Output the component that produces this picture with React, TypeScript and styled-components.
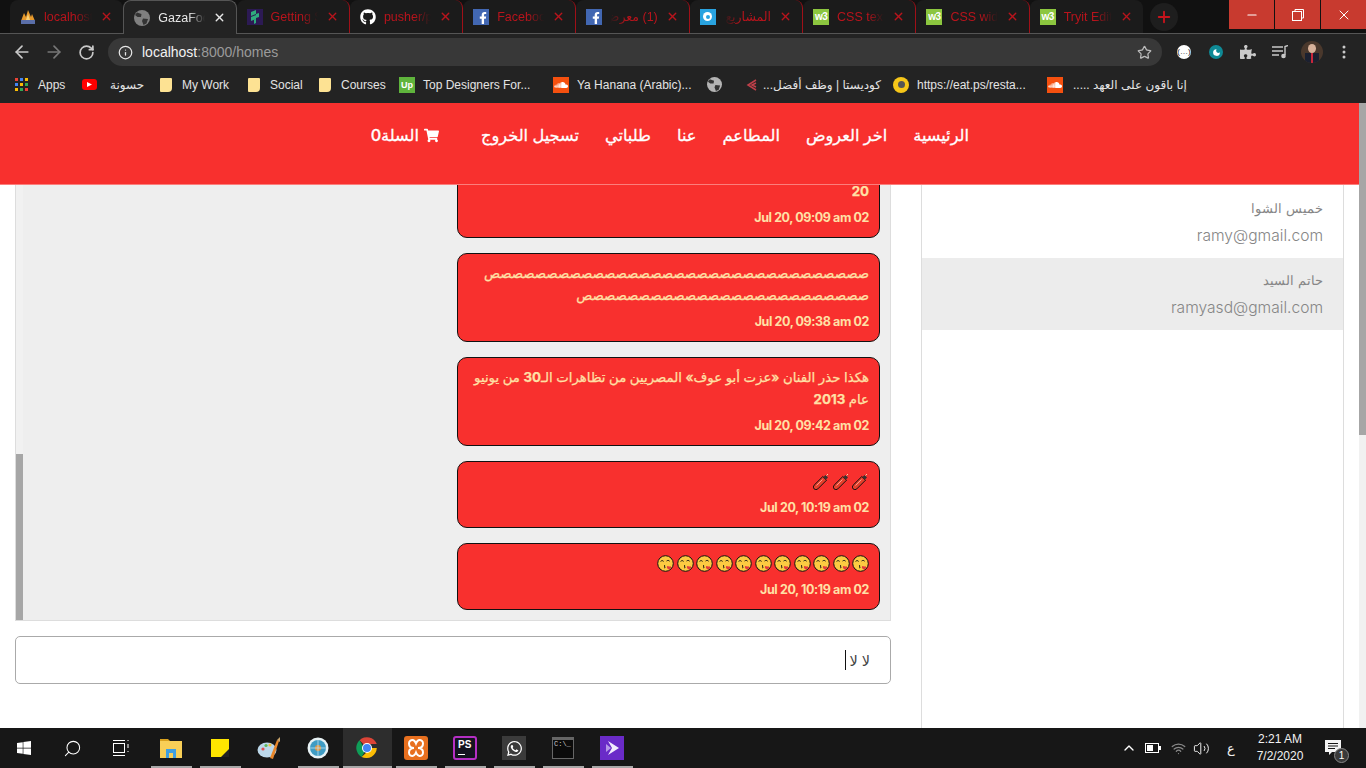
import React from 'react';
import styled, { createGlobalStyle } from 'styled-components';
import { ArrowLeft, ArrowRight, RotateCw, Info, Star, Plus, X, Minus, Search, ChevronUp, Volume2, Wifi, Moon } from 'lucide-react';
import { FaFacebookF, FaGithub, FaPuzzlePiece, FaShoppingCart, FaSoundcloud, FaWhatsapp, FaWindows } from 'react-icons/fa';

const GlobalStyle = createGlobalStyle`
  html, body {
    margin: 0;
    height: 100%;
    overflow: hidden;
    background: #fff;
  }
  * {
    box-sizing: border-box;
  }
`;

const uiFont = '"Liberation Sans", "DejaVu Sans", sans-serif';
const pageFont = 'Inter, "DejaVu Sans", sans-serif';

const Screen = styled.div`
  width: 1366px;
  height: 768px;
  display: flex;
  flex-direction: column;
  overflow: hidden;
  font-family: ${uiFont};
`;

/* browser chrome */
const TabStrip = styled.div`
  height: 34px;
  flex: none;
  display: flex;
  background: #111;
  border-bottom: 1px solid #555;
  padding-left: 10px;
`;

const Tab = styled.div<{ $active?: boolean; $sep?: boolean }>`
  width: 113.3px;
  height: ${(p) => (p.$active ? '34px' : '33px')};
  flex: none;
  display: flex;
  align-items: center;
  gap: 8px;
  padding: 0 10px 0 10px;
  background: ${(p) => (p.$active ? '#232323' : '#1b1b1b')};
  border-radius: 8px 8px 0 0;
  border: ${(p) => (p.$active ? '1px solid #555' : 'none')};
  border-bottom: none;
  border-right: ${(p) => (p.$sep ? '1px solid #a01018' : undefined)};
  color: ${(p) => (p.$active ? '#e8e8e8' : '#b8141c')};
  font-size: 12.5px;
`;

const TabIcon = styled.div`
  width: 16px;
  height: 16px;
  flex: none;
  display: flex;
  align-items: center;
  justify-content: center;
`;

const TabTitle = styled.div<{ $rtl?: boolean }>`
  flex: 1;
  min-width: 0;
  overflow: hidden;
  white-space: nowrap;
  direction: ${(p) => (p.$rtl ? 'rtl' : 'ltr')};
  -webkit-mask-image: linear-gradient(to ${(p) => (p.$rtl ? 'left' : 'right')}, #000 65%, transparent);
  mask-image: linear-gradient(to ${(p) => (p.$rtl ? 'left' : 'right')}, #000 65%, transparent);
`;

const NewTab = styled.div`
  width: 28px;
  height: 28px;
  flex: none;
  margin: 3px 0 0 7px;
  border-radius: 50%;
  background: #1e1e1e;
  color: #c8141c;
  display: flex;
  align-items: center;
  justify-content: center;
`;

const WindowControls = styled.div`
  margin-left: auto;
  height: 29px;
  display: flex;
  gap: 1px;
`;

const WindowButton = styled.div<{ $w: number }>`
  width: ${(p) => p.$w}px;
  background: #c83a2f;
  color: #fff;
  display: flex;
  align-items: center;
  justify-content: center;
`;

const Toolbar = styled.div`
  height: 32px;
  flex: none;
  display: flex;
  align-items: center;
  background: #232323;
  padding: 4px 0 0 6px;
`;

const NavButton = styled.div<{ $dim?: boolean }>`
  width: 32px;
  display: flex;
  justify-content: center;
  color: ${(p) => (p.$dim ? '#777' : '#c9c9c9')};
`;

const UrlBar = styled.div`
  width: 1054px;
  height: 28px;
  margin: 0 6px 0 6px;
  display: flex;
  align-items: center;
  gap: 9px;
  padding: 0 10px 0 10px;
  border-radius: 14px;
  background: #383838;
  color: #e6e6e6;
`;

const UrlText = styled.div`
  flex: 1;
  font-size: 14px;
  color: #f2f2f2;
  span {
    color: #9b9b9b;
  }
`;

const ExtensionSlot = styled.div`
  width: 32px;
  flex: none;
  display: flex;
  justify-content: center;
  color: #c9c9c9;
`;

const WhiteDot = styled.div`
  width: 14px;
  height: 14px;
  border-radius: 50%;
  background: #fff;
  color: #222;
  font-size: 8px;
  line-height: 14px;
  text-align: center;
`;

const Avatar = styled.div`
  position: relative;
  width: 22px;
  height: 22px;
  border-radius: 50%;
  background: #4a382c;
  display: flex;
  justify-content: center;
  align-items: flex-end;
  overflow: hidden;
`;

const AvatarFace = styled.div`
  position: absolute;
  top: 3px;
  left: 7px;
  width: 8px;
  height: 9px;
  border-radius: 50%;
  background: #d8b29a;
`;

const AvatarBody = styled.div`
  width: 14px;
  height: 10px;
  background: linear-gradient(to right, #1b2030 42%, #c9263a 42% 58%, #1b2030 58%);
`;

const Bookmarks = styled.div`
  height: 37px;
  flex: none;
  display: flex;
  align-items: center;
  background: #232323;
  padding-left: 15px;
  color: #e4e4e4;
  font-size: 12px;
`;

const Bookmark = styled.div<{ $w: number; $gap?: number }>`
  width: ${(p) => p.$w}px;
  flex: none;
  display: flex;
  align-items: center;
  gap: ${(p) => p.$gap ?? 10}px;
  white-space: nowrap;
`;

const RtlLabel = styled.span`
  direction: rtl;
  unicode-bidi: isolate;
`;

const Folder = styled.div`
  width: 12px;
  height: 14px;
  flex: none;
  background: #fde293;
  border-radius: 1px;
  border-bottom-right-radius: 4px;
`;

const IconTile = styled.div<{ $bg: string; $size?: number; $round?: boolean }>`
  width: ${(p) => p.$size ?? 16}px;
  height: ${(p) => p.$size ?? 16}px;
  flex: none;
  background: ${(p) => p.$bg};
  border-radius: ${(p) => (p.$round ? '50%' : '0')};
  color: #fff;
  display: flex;
  align-items: center;
  justify-content: center;
`;

const W3Mark = styled(IconTile)`
  font-size: 10px;
  font-weight: 700;
  letter-spacing: -0.5px;
`;

const YoutubeTile = styled(IconTile)`
  height: 11px;
  border-radius: 3px;
`;

const UpworkTile = styled(IconTile)`
  font-size: 9px;
  font-weight: 700;
`;

/* page */
const PageRow = styled.div`
  flex: 1;
  min-height: 0;
  display: flex;
`;

const Page = styled.div`
  flex: 1;
  min-width: 0;
  display: flex;
  flex-direction: column;
  background: #fff;
  font-family: ${pageFont};
`;

const PageScroll = styled.div`
  width: 7px;
  flex: none;
  background: #f1f1f1;
`;

const PageThumb = styled.div`
  height: 332px;
  background: #a6a6a6;
`;

const Navbar = styled.nav`
  height: 82px;
  flex: none;
  display: flex;
  direction: rtl;
  align-items: flex-start;
  gap: 26px;
  padding: 21px 390px 0 0;
  background: #f8302e;
  border-bottom: 1px solid #fb7e7c;
  color: #fff;
  font-size: 16.2px;
  font-weight: 500;
  line-height: 22px;
  -webkit-text-stroke: 0.3px #fff;
`;

const NavItem = styled.div<{ $wide?: boolean }>`
  white-space: nowrap;
  display: flex;
  align-items: center;
  gap: 5px;
  margin-right: ${(p) => (p.$wide ? '16px' : '0')};
`;

const Main = styled.div`
  flex: 1;
  min-height: 0;
  display: flex;
  gap: 30px;
  padding: 0 15px;
`;

const ChatColumn = styled.div`
  width: 876px;
  flex: none;
  display: flex;
  flex-direction: column;
  gap: 15px;
  padding-bottom: 44px;
`;

const ChatPanel = styled.div`
  flex: 1;
  min-height: 0;
  display: flex;
  background: #eee;
  border: 1px solid #ddd;
  border-top: none;
`;

const ChatScroll = styled.div`
  width: 7px;
  flex: none;
  display: flex;
  flex-direction: column;
  justify-content: flex-end;
  background: #f1f1f1;
`;

const ChatThumb = styled.div`
  height: 166px;
  background: #a6a6a6;
`;

const Messages = styled.div`
  flex: 1;
  min-width: 0;
  display: flex;
  flex-direction: column;
  justify-content: flex-end;
  align-items: flex-end;
  gap: 15px;
  overflow: hidden;
  padding: 0 10px 10px 0;
`;

const Bubble = styled.div`
  width: 423px;
  flex: none;
  padding: 8px 10px 9px;
  background: #f8302e;
  border: 1px solid #111;
  border-radius: 10px;
  color: #ffe0a6;
  direction: rtl;
  font-size: 13.3px;
  font-weight: 500;
  line-height: 22px;
`;

const BubbleLine = styled.div`
  white-space: nowrap;
  -webkit-text-stroke: 0.25px #ffe0a6;
`;

const Strong = styled.span`
  font-weight: 700;
`;

const BubbleTime = styled.div`
  margin-top: 5px;
  direction: ltr;
  text-align: right;
  font-size: 12.5px;
  font-weight: 700;
  line-height: 21px;
  letter-spacing: -0.4px;
`;

const EmojiRow = styled.div`
  height: 22px;
  display: flex;
  align-items: center;
  gap: 2.5px;
`;

const MessageInput = styled.div`
  height: 48px;
  flex: none;
  display: flex;
  align-items: center;
  direction: rtl;
  padding-right: 20px;
  border: 1px solid #aaa;
  border-radius: 5px;
  background: #fff;
  color: #444;
  font-size: 14.5px;
`;

const Caret = styled.div`
  width: 1px;
  height: 20px;
  margin-right: 3px;
  background: #111;
`;

const Sidebar = styled.aside`
  width: 423px;
  flex: none;
  padding-top: 1px;
  border-left: 1px solid #ddd;
  border-right: 1px solid #ddd;
`;

const ContactRow = styled.div<{ $shaded?: boolean }>`
  height: 72px;
  padding: 13px 20px 0 0;
  background: ${(p) => (p.$shaded ? '#ececec' : '#fff')};
  text-align: right;
  color: #868686;
`;

const ContactName = styled.div`
  direction: rtl;
  font-size: 12.5px;
  font-weight: 300;
  line-height: 20px;
`;

const ContactEmail = styled.div`
  margin-top: 7px;
  font-size: 15.6px;
  font-weight: 300;
  line-height: 20px;
`;

/* windows taskbar */
const Taskbar = styled.div`
  height: 40px;
  flex: none;
  display: flex;
  background: #171717;
  color: #fff;
`;

const TaskSlot = styled.div<{ $w?: number; $open?: boolean; $active?: boolean }>`
  position: relative;
  width: ${(p) => p.$w ?? 49}px;
  flex: none;
  display: flex;
  align-items: center;
  justify-content: center;
  background: ${(p) => (p.$active ? '#2d2d2d' : 'transparent')};
  &::after {
    content: '';
    display: ${(p) => (p.$open ? 'block' : 'none')};
    position: absolute;
    bottom: 0;
    left: ${(p) => (p.$active ? '0' : '4px')};
    right: ${(p) => (p.$active ? '0' : '4px')};
    height: 2px;
    background: #a8a8a8;
  }
`;

const Tray = styled.div`
  margin-left: auto;
  display: flex;
  padding-right: 9px;
`;

const Clock = styled.div`
  font-size: 12px;
  line-height: 17px;
  text-align: center;
  color: #f2f2f2;
`;

const LangMark = styled.div`
  font-size: 13px;
  color: #eee;
`;

const NoticeWrap = styled.div`
  position: relative;
  width: 16px;
  height: 17px;
`;

const NoticeBadge = styled.div`
  position: absolute;
  right: -8px;
  bottom: -6px;
  width: 15px;
  height: 15px;
  border-radius: 50%;
  background: #3a3a3a;
  border: 1px solid #888;
  font-size: 10px;
  line-height: 13px;
  text-align: center;
  color: #fff;
`;

const TerminalBox = styled.div`
  width: 22px;
  height: 22px;
  background: #0b0b0b;
  border: 1px solid #666;
  border-top-width: 3px;
  color: #ccc;
  font-family: "Liberation Mono", monospace;
  font-size: 7px;
  line-height: 9px;
  padding-left: 1px;
`;

const XamppTile = styled(IconTile)`
  border-radius: 3px;
`;

const PsTile = styled.div`
  position: relative;
  width: 24px;
  height: 24px;
  padding: 1px 0 0 3px;
  background: #14141f;
  border: 2px solid #b52fc4;
  border-radius: 3px;
  color: #fff;
  font-size: 10px;
  font-weight: 700;
  line-height: 12px;
  &::after {
    content: '';
    position: absolute;
    left: 3px;
    bottom: 3px;
    width: 7px;
    height: 1px;
    background: #fff;
  }
`;

/* drawings */
const Globe = ({ size = 16, fill = '#b4b4b4' }: { size?: number; fill?: string }) => (
  <svg width={size} height={size} viewBox="0 0 16 16">
    <circle cx="8" cy="8" r="8" fill={fill} />
    <path d="M3 2.500 7.500 4 7 7 3.500 7 1 5ZM9 8.500l5 .5-1.500 4.500L9.500 15 8 11Z" fill="#333" />
  </svg>
);

const ChromeLogo = () => (
  <svg width="22" height="22" viewBox="0 0 22 22">
    <path d="M11 11 3.600 3.200A10.500 10.500 0 0 1 20.800 7H11Z" fill="#db4437" />
    <path d="M11 11 5.600 20A10.500 10.500 0 0 1 3.600 3.200L8 11Z" fill="#0f9d58" />
    <path d="M11 11h9.800A10.500 10.500 0 0 1 5.600 20L11 15Z" fill="#fbbc05" />
    <circle cx="11" cy="11" r="5" fill="#fff" />
    <circle cx="11" cy="11" r="4" fill="#4285f4" />
  </svg>
);

const FlameLogo = () => (
  <svg width="16" height="16" viewBox="0 0 16 16">
    <path d="M1 12 4 4l2 4 2-7 3 7 1-3 3 7Z" fill="#e89a2c" />
    <path d="M6 11l2-6 2 6Z" fill="#f8d27a" />
    <rect x="1" y="11" width="14" height="4" fill="#5a6ea8" />
  </svg>
);

const PusherLogo = () => (
  <svg width="16" height="16" viewBox="0 0 16 16">
    <rect width="16" height="16" fill="#2c1a54" />
    <path d="M4 3 9 1v4L4 7ZM4 8l5-2v4l-5 2ZM9 5l3-1v4L9 9ZM7 11l2-1v4l-2 1Z" fill="#2fae7e" />
  </svg>
);

const AppsGrid = () => (
  <svg width="13" height="13" viewBox="0 0 13 13">
    {[0, 5, 10].map((y, row) =>
      [0, 5, 10].map((x, col) => (
        <rect key={`${row}${col}`} x={x} y={y} width="3" height="3" fill={['#ea4335', '#4285f4', '#fbbc05', '#34a853'][(row + col) % 4]} />
      )),
    )}
  </svg>
);

const Firecracker = () => (
  <svg width="17" height="17" viewBox="0 0 17 17">
    <path d="M1.100 12.200 9.800 3.500 13.500 7.200 4.800 15.900a2.600 2.600 0 0 1-3.700-3.700Z" fill="#e5402c" stroke="#111" strokeWidth="1" />
    <path d="M3.500 12.500 9.500 6.500" stroke="#f7a090" strokeWidth="1" />
    <path d="M10.500 4 12.500 2l2.500 2.500-2 2Z" fill="#333" />
    <path d="M13.500 2.500 15 1" stroke="#f2d9a8" strokeWidth="1" />
  </svg>
);

const KissFace = () => (
  <svg width="17" height="17" viewBox="0 0 17 17">
    <circle cx="8.500" cy="8.500" r="7.800" fill="#fccb42" stroke="#111" strokeWidth="1" />
    <path d="M3.600 6.400c1-1 2.200-1 3 0M9.600 6c1-.8 2.200-.8 3 .2" fill="none" stroke="#111" strokeWidth="1" />
    <path d="M7 10.400c1.200.2 1.600.8.400 1.200 1.200.4.800 1.200-.4 1.400" fill="none" stroke="#111" strokeWidth=".9" />
    <path d="M11.600 14.400c-2-1.200-2.200-3-1-3.400.7-.2 1.200.2 1.400.7.4-.5 1-.7 1.700-.3 1 .7.400 2.400-2.100 3Z" fill="#e33b3b" />
  </svg>
);

const ExplorerIcon = () => (
  <svg width="22" height="20" viewBox="0 0 22 20">
    <path d="M0 3V1h8l2 2Z" fill="#d9a21f" />
    <rect y="3" width="22" height="17" fill="#f8cf57" />
    <rect x="6" y="11" width="10" height="9" fill="#3f9fe0" />
    <rect x="9" y="15" width="4" height="5" fill="#f8cf57" />
  </svg>
);

const StickyIcon = () => (
  <svg width="18" height="18" viewBox="0 0 18 18">
    <rect width="18" height="18" fill="#ffe600" />
    <path d="M18 10v8H10Z" fill="#222" />
  </svg>
);

const PaintIcon = () => (
  <svg width="24" height="24" viewBox="0 0 24 24">
    <ellipse cx="10" cy="14" rx="9.500" ry="7.500" fill="#bcd8ea" />
    <circle cx="6" cy="13" r="1.600" fill="#e05050" />
    <circle cx="9" cy="9.500" r="1.600" fill="#5cb85c" />
    <circle cx="13" cy="9" r="1.600" fill="#f0c040" />
    <path d="M13 22 20 4l2 1-6 18Z" fill="#e8862a" />
    <path d="M20 4l3-3 0 5Z" fill="#c9a46a" />
  </svg>
);

const CompassIcon = () => (
  <svg width="22" height="22" viewBox="0 0 22 22">
    <circle cx="11" cy="11" r="10.500" fill="#e8f2f5" />
    <circle cx="11" cy="11" r="8" fill="#3f9cc4" />
    <circle cx="11" cy="11" r="3" fill="#e8963a" />
    <path d="M11 3v16M3 11h16" stroke="#bfe0ee" strokeWidth=".8" />
  </svg>
);

const VsIcon = () => (
  <svg width="24" height="24" viewBox="0 0 24 24">
    <rect width="24" height="24" fill="#6a2bc8" />
    <path d="M8 5l11 7-11 7 4-7Z" fill="#f2ecfd" />
    <path d="M6 8l5 4-5 4Z" fill="#b79ae8" />
  </svg>
);

const TaskViewIcon = () => (
  <svg width="16" height="18" viewBox="0 0 16 18" fill="none" stroke="#fff" strokeWidth="1">
    <rect x="0.500" y="4.500" width="11" height="9" />
    <path d="M0 1.500h12M0 16.500h12M15 1v1M15 5v4M15 12v1" />
  </svg>
);

const BatteryIcon = () => (
  <svg width="16" height="10" viewBox="0 0 16 10">
    <rect x="0.500" y="0.500" width="13" height="9" fill="none" stroke="#fff" />
    <rect x="2" y="2" width="6" height="6" fill="#fff" />
    <rect x="14" y="3" width="2" height="4" fill="#fff" />
  </svg>
);

const NoticeIcon = () => (
  <svg width="16" height="16" viewBox="0 0 16 16">
    <path d="M0 0h16v12H7l-3 3v-3H0Z" fill="#f4f4f4" />
    <path d="M3 3.500h10M3 6h10M3 8.500h7" stroke="#171717" strokeWidth="1" />
  </svg>
);

const XamppMark = () => (
  <svg width="16" height="18" viewBox="0 0 16 18" fill="none" stroke="#fff" strokeWidth="2">
    <path d="M6 9C2 9 1 7 1 4.500S3 1 4.500 1 7 2 8 4.500C9 2 10 1 11.500 1S15 2 15 4.500 14 9 10 9M6 9c-4 0-5 2-5 4.500S3 17 4.500 17 7 16 8 13.500c1 2.500 2 3.500 3.500 3.500s3.500-1 3.500-3.500S14 9 10 9" />
  </svg>
);

const PlaylistIcon = () => (
  <svg width="16" height="14" viewBox="0 0 16 14" fill="none" stroke="#c9c9c9" strokeWidth="1.400">
    <path d="M0 2h11M0 6h11M0 10h7M13 10V1.500l3-1" />
    <circle cx="11.500" cy="11" r="1.600" fill="#c9c9c9" />
  </svg>
);

const MoreIcon = () => (
  <svg width="4" height="14" viewBox="0 0 4 14" fill="#c9c9c9">
    <circle cx="2" cy="2" r="1.500" />
    <circle cx="2" cy="7" r="1.500" />
    <circle cx="2" cy="12" r="1.500" />
  </svg>
);

const FbGlyph = styled(FaFacebookF)`
  margin: 0 0 -3px 3px;
`;

const fbIcon = (
  <IconTile $bg="#4267b2">
    <FbGlyph size={12} />
  </IconTile>
);

const w3Icon = <W3Mark $bg="#8cc63f">w3</W3Mark>;

const soundcloudIcon = (
  <IconTile $bg="#f5500f">
    <FaSoundcloud size={14} />
  </IconTile>
);

type TabData = { title: string; icon: React.ReactNode; rtl?: boolean; active?: boolean; sep?: boolean };

const tabs: TabData[] = [
  { title: 'localhost', icon: <FlameLogo /> },
  { title: 'GazaFood', icon: <Globe fill="#808080" />, active: true },
  { title: 'Getting Started', icon: <PusherLogo />, sep: true },
  { title: 'pusher/pusher', icon: <FaGithub size={16} color="#fff" />, sep: true },
  { title: 'Facebook', icon: fbIcon, sep: true },
  { title: '(1) معرض', icon: fbIcon, rtl: true, sep: true },
  {
    title: 'المشاريع',
    icon: (
      <IconTile $bg="#29a3e0">
        <IconTile $bg="#fff" $size={9} $round>
          <IconTile $bg="#29a3e0" $size={4} $round />
        </IconTile>
      </IconTile>
    ),
    rtl: true,
    sep: true,
  },
  { title: 'CSS text-align', icon: w3Icon, sep: true },
  { title: 'CSS width', icon: w3Icon, sep: true },
  { title: 'Tryit Editor', icon: w3Icon },
];

const messages = [
  { lines: [<Strong>20</Strong>], time: 'Jul 20, 09:09 am 02' },
  { lines: ['ص'.repeat(33), 'ص'.repeat(25)], time: 'Jul 20, 09:38 am 02' },
  {
    lines: [
      <>
        هكذا حذر الفنان «عزت أبو عوف» المصريين من تظاهرات الـ<Strong>30</Strong> من يونيو
      </>,
      <>
        عام <Strong>2013</Strong>
      </>,
    ],
    time: 'Jul 20, 09:42 am 02',
  },
];

const App: React.FC = () => {
  return (
    <Screen>
      <GlobalStyle />
      <TabStrip>
        {tabs.map((tab) => (
          <Tab key={tab.title} $active={tab.active} $sep={tab.sep}>
            <TabIcon>{tab.icon}</TabIcon>
            <TabTitle $rtl={tab.rtl}>{tab.title}</TabTitle>
            <X size={13} strokeWidth={2.5} />
          </Tab>
        ))}
        <NewTab>
          <Plus size={18} strokeWidth={2.5} />
        </NewTab>
        <WindowControls>
          <WindowButton $w={45}>
            <Minus size={14} />
          </WindowButton>
          <WindowButton $w={45}>
            <svg width="12" height="12" viewBox="0 0 12 12" fill="none" stroke="#fff">
              <rect x="0.500" y="2.500" width="9" height="9" />
              <path d="M3 2.500V.5h8.500v8.500H9.500" />
            </svg>
          </WindowButton>
          <WindowButton $w={45}>
            <X size={16} strokeWidth={1.5} />
          </WindowButton>
        </WindowControls>
      </TabStrip>

      <Toolbar>
        <NavButton>
          <ArrowLeft size={20} />
        </NavButton>
        <NavButton $dim>
          <ArrowRight size={20} />
        </NavButton>
        <NavButton>
          <RotateCw size={17} strokeWidth={2.4} />
        </NavButton>
        <UrlBar>
          <Info size={15} />
          <UrlText>
            localhost<span>:8000/homes</span>
          </UrlText>
          <Star size={15} color="#bbb" />
        </UrlBar>
        <ExtensionSlot>
          <WhiteDot>(…)</WhiteDot>
        </ExtensionSlot>
        <ExtensionSlot>
          <IconTile $bg="#0f8a96" $size={14} $round>
            <Moon size={9} fill="#fff" strokeWidth={0} />
          </IconTile>
        </ExtensionSlot>
        <ExtensionSlot>
          <FaPuzzlePiece size={16} />
        </ExtensionSlot>
        <ExtensionSlot>
          <PlaylistIcon />
        </ExtensionSlot>
        <ExtensionSlot>
          <Avatar>
            <AvatarFace />
            <AvatarBody />
          </Avatar>
        </ExtensionSlot>
        <ExtensionSlot>
          <MoreIcon />
        </ExtensionSlot>
      </Toolbar>

      <Bookmarks>
        <Bookmark $w={67}>
          <AppsGrid />
          Apps
        </Bookmark>
        <Bookmark $w={78} $gap={13}>
          <YoutubeTile $bg="#f00" $size={15}>
            <svg width="5" height="5" viewBox="0 0 5 5">
              <path d="M0 0l5 2.500-5 2.500Z" fill="#fff" />
            </svg>
          </YoutubeTile>
          حسونة
        </Bookmark>
        <Bookmark $w={88}>
          <Folder />
          My Work
        </Bookmark>
        <Bookmark $w={71}>
          <Folder />
          Social
        </Bookmark>
        <Bookmark $w={80}>
          <Folder />
          Courses
        </Bookmark>
        <Bookmark $w={154} $gap={8}>
          <UpworkTile $bg="#5fb43c">Up</UpworkTile>
          Top Designers For...
        </Bookmark>
        <Bookmark $w={154} $gap={8}>
          {soundcloudIcon}
          Ya Hanana (Arabic)...
        </Bookmark>
        <Bookmark $w={38}>
          <Globe size={15} />
        </Bookmark>
        <Bookmark $w={148} $gap={6}>
          <svg width="12" height="14" viewBox="0 0 12 14" fill="none" stroke="#c0404a" strokeWidth="1.500">
            <path d="M11 2 3 7l8 5M11 5 7 7l4 2" />
          </svg>
          <RtlLabel>كوديستا | وظف أفضل...</RtlLabel>
        </Bookmark>
        <Bookmark $w={154} $gap={8}>
          <IconTile $bg="#f6c619" $round>
            <IconTile $bg="#555" $size={7} $round />
          </IconTile>
          https://eat.ps/resta...
        </Bookmark>
        <Bookmark $w={140}>
          {soundcloudIcon}
          <RtlLabel>إنا باقون على العهد .....</RtlLabel>
        </Bookmark>
      </Bookmarks>

      <PageRow>
        <Page>
          <Navbar>
            <NavItem>الرئيسية</NavItem>
            <NavItem>اخر العروض</NavItem>
            <NavItem>المطاعم</NavItem>
            <NavItem>عنا</NavItem>
            <NavItem>طلباتي</NavItem>
            <NavItem>تسجيل الخروج</NavItem>
            <NavItem $wide>
              <FaShoppingCart size={15} />
              السلة0
            </NavItem>
          </Navbar>
          <Main>
            <ChatColumn>
              <ChatPanel>
                <ChatScroll>
                  <ChatThumb />
                </ChatScroll>
                <Messages>
                  {messages.map((message) => (
                    <Bubble key={message.time}>
                      {message.lines.map((line, i) => (
                        <BubbleLine key={i}>{line}</BubbleLine>
                      ))}
                      <BubbleTime>{message.time}</BubbleTime>
                    </Bubble>
                  ))}
                  <Bubble>
                    <EmojiRow>
                      {[0, 1, 2].map((i) => (
                        <Firecracker key={i} />
                      ))}
                    </EmojiRow>
                    <BubbleTime>Jul 20, 10:19 am 02</BubbleTime>
                  </Bubble>
                  <Bubble>
                    <EmojiRow>
                      {Array.from({ length: 11 }, (_, i) => (
                        <KissFace key={i} />
                      ))}
                    </EmojiRow>
                    <BubbleTime>Jul 20, 10:19 am 02</BubbleTime>
                  </Bubble>
                </Messages>
              </ChatPanel>
              <MessageInput>
                لا لا
                <Caret />
              </MessageInput>
            </ChatColumn>
            <Sidebar>
              <ContactRow>
                <ContactName>خميس الشوا</ContactName>
                <ContactEmail>ramy@gmail.com</ContactEmail>
              </ContactRow>
              <ContactRow $shaded>
                <ContactName>حاتم السيد</ContactName>
                <ContactEmail>ramyasd@gmail.com</ContactEmail>
              </ContactRow>
            </Sidebar>
          </Main>
        </Page>
        <PageScroll>
          <PageThumb />
        </PageScroll>
      </PageRow>

      <Taskbar>
        <TaskSlot $w={48}>
          <FaWindows size={16} />
        </TaskSlot>
        <TaskSlot $w={48}>
          <Search size={19} strokeWidth={1.3} transform="scale(-1 1)" />
        </TaskSlot>
        <TaskSlot $w={50.5}>
          <TaskViewIcon />
        </TaskSlot>
        <TaskSlot $open>
          <ExplorerIcon />
        </TaskSlot>
        <TaskSlot $open>
          <StickyIcon />
        </TaskSlot>
        <TaskSlot>
          <PaintIcon />
        </TaskSlot>
        <TaskSlot $open>
          <CompassIcon />
        </TaskSlot>
        <TaskSlot $open $active>
          <ChromeLogo />
        </TaskSlot>
        <TaskSlot $open>
          <XamppTile $bg="#e8701f" $size={24}>
            <XamppMark />
          </XamppTile>
        </TaskSlot>
        <TaskSlot $open>
          <PsTile>PS</PsTile>
        </TaskSlot>
        <TaskSlot $open>
          <IconTile $bg="#3b3b3b" $size={24}>
            <FaWhatsapp size={17} />
          </IconTile>
        </TaskSlot>
        <TaskSlot $open>
          <TerminalBox>C:\_</TerminalBox>
        </TaskSlot>
        <TaskSlot $open>
          <VsIcon />
        </TaskSlot>
        <Tray>
          <TaskSlot $w={24}>
            <ChevronUp size={16} />
          </TaskSlot>
          <TaskSlot $w={24}>
            <BatteryIcon />
          </TaskSlot>
          <TaskSlot $w={26}>
            <Wifi size={15} color="#888" />
          </TaskSlot>
          <TaskSlot $w={20}>
            <Volume2 size={17} strokeWidth={1.3} />
          </TaskSlot>
          <TaskSlot $w={40}>
            <LangMark>ع</LangMark>
          </TaskSlot>
          <TaskSlot $w={58}>
            <Clock>
              2:21 AM
              <br />
              7/2/2020
            </Clock>
          </TaskSlot>
          <TaskSlot $w={48}>
            <NoticeWrap>
              <NoticeIcon />
              <NoticeBadge>1</NoticeBadge>
            </NoticeWrap>
          </TaskSlot>
        </Tray>
      </Taskbar>
    </Screen>
  );
};

export default App;
